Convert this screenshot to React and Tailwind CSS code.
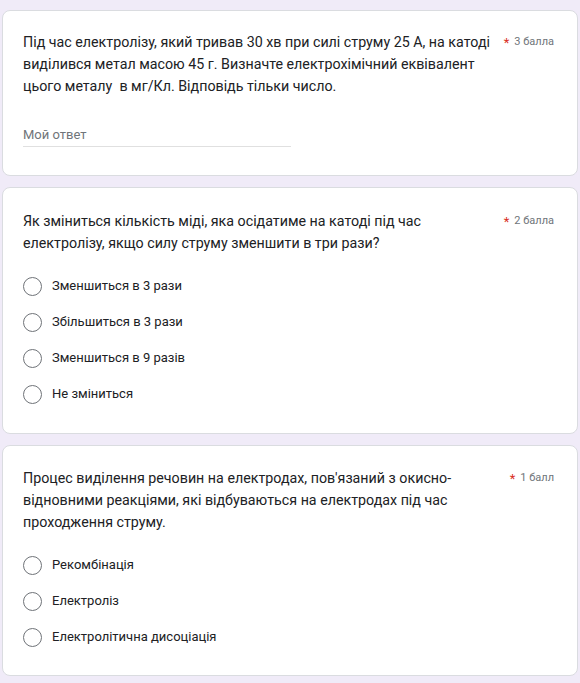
const QUESTIONS = [
  {
    id: 2,
    lines: [
      'Як зміниться кількість міді, яка осідатиме на катоді під час',
      'електролізу, якщо силу струму зменшити в три рази?',
    ],
    points: '2 балла',
    options: ['Зменшиться в 3 рази', 'Збільшиться в 3 рази', 'Зменшиться в 9 разів', 'Не зміниться'],
  },
  {
    id: 3,
    lines: [
      "Процес виділення речовин на електродах, пов'язаний з окисно-",
      'відновними реакціями, які відбуваються на електродах під час',
      'проходження струму.',
    ],
    points: '1 балл',
    options: ['Рекомбінація', 'Електроліз', 'Електролітична дисоціація'],
  },
];

function Card({ children, className = '' }) {
  return (
    <div className={`ml-[2px] w-[576px] bg-white border border-[#dadce0] rounded-lg pl-[20px] pr-[23px] ${className}`}>
      {children}
    </div>
  );
}

function Title({ lines, points }) {
  return (
    <div className="flex items-start justify-between">
      <div className="text-[14.25px] leading-[22px] text-[#202124]">
        {lines.map((l, i) => (
          <div key={i} className="whitespace-pre">{l}</div>
        ))}
      </div>
      <div className="flex items-center h-[22px] shrink-0">
        <span className="text-[#d93025] text-[13px] mr-[5px] leading-none">*</span>
        <span className="text-[11px] text-[#70757a]">{points}</span>
      </div>
    </div>
  );
}

function Radio({ label }) {
  return (
    <div className="flex items-center h-[36px]">
      <span className="w-[19px] h-[19px] rounded-full border-[1.5px] border-[#6f7378]" />
      <span className="ml-[10px] text-[13px] text-[#202124]">{label}</span>
    </div>
  );
}

export default function App() {
  return (
    <div className="min-h-[683px] bg-[#f0ebf8] pt-[10px] pb-[6px] font-['Roboto',_'Liberation_Sans',_sans-serif]">
      <Card className="pt-[20px] pb-[28px]">
        <Title
          lines={[
            'Під час електролізу, який тривав 30 хв при силі струму 25 А, на катоді',
            'виділився метал масою 45 г. Визначте електрохімічний еквівалент',
            'цього металу  в мг/Кл. Відповідь тільки число.',
          ]}
          points="3 балла"
        />
        <div className="mt-[28px] w-[268px] border-b border-[#e0e0e0] pb-[1px] text-[13px] leading-[20px] text-[#70757a]">
          Мой ответ
        </div>
      </Card>

      <Card className="mt-[11px] pt-[22px] pb-[21px]">
        <Title lines={QUESTIONS[0].lines} points={QUESTIONS[0].points} />
        <div className="mt-[14px]">
          {QUESTIONS[0].options.map((o) => (
            <Radio key={o} label={o} />
          ))}
        </div>
      </Card>

      <Card className="mt-[11px] pt-[21px] pb-[20px]">
        <Title lines={QUESTIONS[1].lines} points={QUESTIONS[1].points} />
        <div className="mt-[14px]">
          {QUESTIONS[1].options.map((o) => (
            <Radio key={o} label={o} />
          ))}
        </div>
      </Card>
    </div>
  );
}
